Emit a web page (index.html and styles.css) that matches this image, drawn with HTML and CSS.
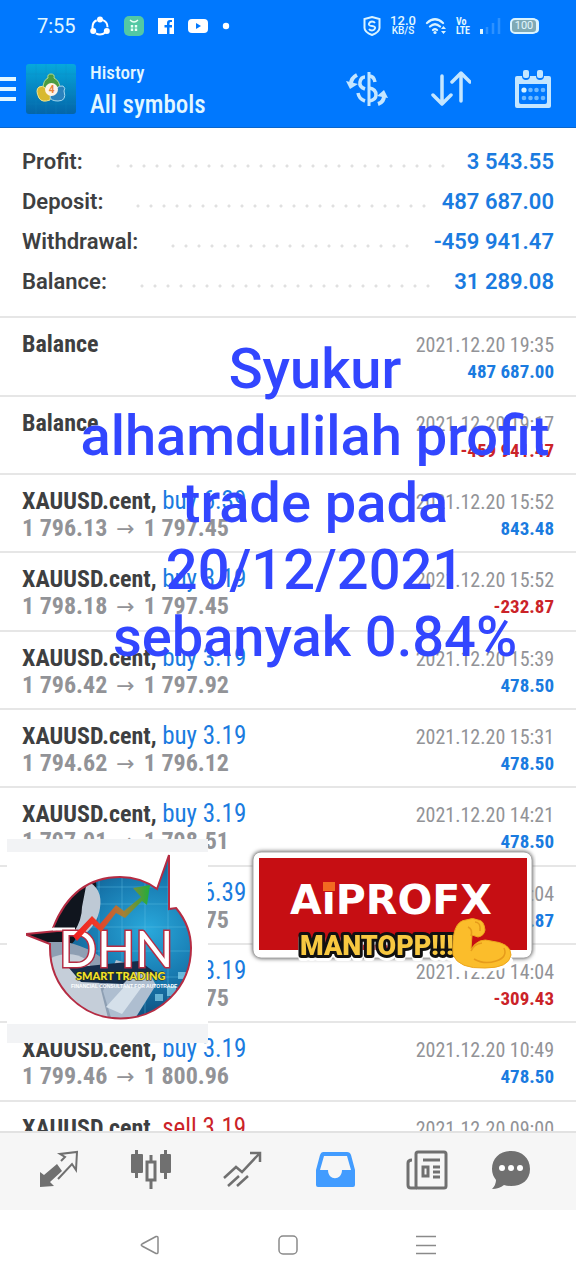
FILE: index.html
```html
<!DOCTYPE html>
<html lang="en">
<head>
    <meta charset="UTF-8">
    <meta name="viewport" content="width=device-width, initial-scale=1.0">
    <title>History</title>
    <link rel="stylesheet" href="styles.css">
</head>
<body>
    <header>
        <div class="status">
            <span class="time">7:55</span>
            <svg width="20" height="20" viewBox="0 0 20 20"><circle cx="10" cy="11" r="7.5" fill="none" stroke="#fff" stroke-width="2" stroke-dasharray="10 5.7" stroke-dashoffset="-6"/><circle cx="10" cy="3.5" r="3" fill="#fff"/><circle cx="3.2" cy="15" r="3" fill="#fff"/><circle cx="16.8" cy="15" r="3" fill="#fff"/></svg>
            <svg width="20" height="20" viewBox="0 0 20 20"><rect width="20" height="20" rx="5" fill="#53c8a4"/><path d="M6 4q4 4 8 0" fill="none" stroke="#e8fff5" stroke-width="1.3"/><path d="M8 9v6M12 9v6" stroke="#e8fff5" stroke-width="2.4" stroke-dasharray="2.4 1.2"/></svg>
            <svg width="16" height="16" viewBox="0 0 16 16"><path fill="#fff" d="M0 0h16v16h-4.500V9.500H14V7h-2.500V5.500c0-1 .5-1.500 1.500-1.500h1V2h-2c-2 0-3 1.200-3 3v2H6.500v2.500H9V16H0z"/></svg>
            <svg width="20" height="16" viewBox="0 0 20 16"><rect y="1" width="20" height="14" rx="4" fill="#fff"/><path d="M8 5l5 3-5 3z" fill="#0078fe"/></svg>
            <svg class="dot" width="8" height="8" viewBox="0 0 8 8"><circle cx="4" cy="4" r="3.200" fill="#fff"/></svg>
            <div class="system">
                <svg width="18" height="20" viewBox="0 0 18 20"><path d="M9 1l7.500 2v9q0 4-7.500 7Q1.500 16 1.500 12V3z" fill="none" stroke="#d9f3ff" stroke-width="2"/><path d="M12 7q-1-1.500-3-1.500T6 7.500 9 10t3 2.500-3 2-3-1.500" fill="none" stroke="#d9f3ff" stroke-width="1.800"/></svg>
                <span class="speed"><b>12.0</b><small>KB/S</small></span>
                <svg class="wifi" width="22" height="18" viewBox="0 0 22 18"><g fill="none" stroke="#d9f3ff" stroke-width="2.200" stroke-linecap="round"><path d="M2 6q8-7.500 16 0M5 9.500q5-4.500 10 0M8 13q2-1.800 4 0"/></g><circle cx="10" cy="15.500" r="1.600" fill="#d9f3ff"/><path d="M16 12l2.500-3 2.500 3zM16 14l2.500 3 2.500-3z" fill="#d9f3ff"/></svg>
                <span class="lte">Vo<br>LTE</span>
                <svg class="signal" width="22" height="18" viewBox="0 0 22 18"><path d="M2.500 12v5" stroke="#e2f7ff" stroke-width="3"/><path d="M8 10v7M14 6v11M20 1v16" stroke="#2c91ff" stroke-width="2.500"/></svg>
                <span class="battery">100</span>
            </div>
        </div>
        <div class="toolbar">
            <button class="menu" aria-label="Menu"><i></i><i></i><i></i></button>
            <svg class="logo" width="50" height="50" viewBox="0 0 50 50">
                <defs>
                    <linearGradient id="sea" x2="0" y2="1"><stop offset="0" stop-color="#06a8dc"/><stop offset="1" stop-color="#0465a8"/></linearGradient>
                </defs>
                <rect width="50" height="50" rx="3" fill="url(#sea)"/>
                <path d="M10 0v50M20 0v50M30 0v50M40 0v50M0 10h50M0 20h50M0 30h50M0 40h50" stroke="#0e8dc4" stroke-opacity=".5" stroke-width=".5"/>
                <path d="M17 25q0-9 5-11-1-4 3-4t3 4q6 3 6 11z" fill="#4b9b42" stroke="#b6dc8c"/>
                <path d="M13 23q4-2 6 1l6 4-1 8q-8 3-11-2-4-8 0-11z" fill="#d8b92f" stroke="#f3e68d"/>
                <path d="M37 22q3 2 1 5 3 10-6 10-7 0-8-4l5-8q5-4 8-3z" fill="#2b82bd" stroke="#a4d8ef"/>
                <circle cx="25.500" cy="25.500" r="6.500" fill="#fff3e6"/>
                <text x="25.500" y="29" class="four">4</text>
            </svg>
            <h1><small>History</small>All symbols</h1>
            <div class="actions">
                <button aria-label="Symbol"><svg width="42" height="36" viewBox="0 0 42 36" fill="none" stroke="#c4e6ff" stroke-width="3"><path d="M23 1v34"/><path d="M29 11q-1-6-6-6M23 17q7 1 7 7 0 5-7 6M19 18q-6-2-5-7 1-5 5-5M12 22q1 6 7 8" stroke-width="3.500"/><path d="M11 4q-6 3-6 9" stroke-width="4"/><path d="M0 10l4 8 8-5z" fill="#c4e6ff" stroke="none"/><path d="M32 33q6-2 6-8" stroke-width="4"/><path d="M31 25l7-6 4 8z" fill="#c4e6ff" stroke="none"/></svg></button>
                <button aria-label="Sort"><svg width="40" height="36" viewBox="0 0 40 36" fill="none" stroke="#c4e6ff" stroke-width="3.500" stroke-linecap="round" stroke-linejoin="round"><path d="M11 5v27M2 24l9 9 9-9M30 30V3M21 11l9-9 9 9"/></svg></button>
                <button aria-label="Period"><svg width="38" height="40" viewBox="0 0 38 40"><path fill-rule="evenodd" fill="#c4e6ff" d="M3 7h5q0 4 4 4t4-4h6q0 4 4 4t4-4h5q2 0 2 2v28q0 2-2 2H3q-2 0-2-2V9q0-2 2-2zm2 8v18q0 2 2 2h24q2 0 2-2V15z"/><rect x="9" y="1" width="6" height="8" rx="2" fill="#c4e6ff"/><rect x="23" y="1" width="6" height="8" rx="2" fill="#c4e6ff"/><g fill="#6db8ff"><circle cx="10" cy="21" r="2.600" fill="#d9f3ff"/><circle cx="16.500" cy="21" r="2.300"/><circle cx="22.500" cy="21" r="2.300"/><circle cx="29" cy="21" r="2.300"/><circle cx="10" cy="29" r="2.300"/><circle cx="16.500" cy="29" r="2.300"/><circle cx="22.500" cy="29" r="2.300"/><circle cx="29" cy="29" r="2.300"/></g></svg></button>
            </div>
        </div>
    </header>

    <dl class="summary">
        <div><dt>Profit:</dt><dd>3 543.55</dd></div>
        <div><dt>Deposit:</dt><dd>487 687.00</dd></div>
        <div><dt>Withdrawal:</dt><dd>-459 941.47</dd></div>
        <div><dt>Balance:</dt><dd>31 289.08</dd></div>
    </dl>

    <main>
        <ul class="history">
            <li><b>Balance</b><time>2021.12.20 19:35</time><span></span><strong>487 687.00</strong></li>
            <li><b>Balance</b><time>2021.12.20 19:17</time><span></span><strong class="loss">-459 941.47</strong></li>
            <li><b>XAUUSD.cent, <em>buy 6.39</em></b><time>2021.12.20 15:52</time><span>1 796.13<i>→</i>1 797.45</span><strong>843.48</strong></li>
            <li><b>XAUUSD.cent, <em>buy 3.19</em></b><time>2021.12.20 15:52</time><span>1 798.18<i>→</i>1 797.45</span><strong class="loss">-232.87</strong></li>
            <li><b>XAUUSD.cent, <em>buy 3.19</em></b><time>2021.12.20 15:39</time><span>1 796.42<i>→</i>1 797.92</span><strong>478.50</strong></li>
            <li><b>XAUUSD.cent, <em>buy 3.19</em></b><time>2021.12.20 15:31</time><span>1 794.62<i>→</i>1 796.12</span><strong>478.50</strong></li>
            <li><b>XAUUSD.cent, <em>buy 3.19</em></b><time>2021.12.20 14:21</time><span>1 797.01<i>→</i>1 798.51</span><strong>478.50</strong></li>
            <li><b>XAUUSD.cent, <em>buy 6.39</em></b><time>2021.12.20 14:04</time><span>1 796.42<i>→</i>1 796.75</span><strong>210.87</strong></li>
            <li><b>XAUUSD.cent, <em>buy 3.19</em></b><time>2021.12.20 14:04</time><span>1 797.72<i>→</i>1 796.75</span><strong class="loss">-309.43</strong></li>
            <li><b>XAUUSD.cent, <em>buy 3.19</em></b><time>2021.12.20 10:49</time><span>1 799.46<i>→</i>1 800.96</span><strong>478.50</strong></li>
            <li><b>XAUUSD.cent, <em class="loss">sell 3.19</em></b><time>2021.12.20 09:00</time><span></span><strong></strong></li>
        </ul>

        <p class="caption">Syukur<br>alhamdulilah profit<br>trade pada<br>20/12/2021<br>sebanyak 0.84%</p>

        <div class="dhn">
            <svg width="201" height="172" viewBox="0 0 201 172">
                <defs>
                    <radialGradient id="screen" cx=".7" cy=".45" r=".6"><stop offset="0" stop-color="#29a9dc"/><stop offset=".5" stop-color="#1778ae"/><stop offset="1" stop-color="#0d3f6b"/></radialGradient>
                    <linearGradient id="trend"><stop offset="0" stop-color="#f02020"/><stop offset=".3" stop-color="#ee3a28"/><stop offset=".65" stop-color="#a87f35"/><stop offset="1" stop-color="#1fae3c"/></linearGradient>
                    <clipPath id="badge"><path d="M46 76q20-51 67-51 21 0 37 12l12-34v54l7-1q15 18 15 40a70 70 0 0 1-141 0v-4L20 83v-1l30-3z"/></clipPath>
                </defs>
                <g clip-path="url(#badge)">
                    <rect width="201" height="172" fill="url(#screen)"/>
                    <path d="M92 0v172M115 0v172M138 0v172M161 0v172M80 35h121M80 52h121M80 75h121M80 99h121M80 125h121" stroke="#65c3e6" stroke-opacity=".4"/>
                    <path d="M20 20h64q9 10 3 26l-10 20q-4 18-14 28l-10 20H20z" fill="#10151e"/>
                    <path d="M80 29q16 7 13 27-3 18-18 28l-8-4q8-12 8-25z" fill="#bec9d5"/>
                    <path d="M40 90h20q30 8 39 21l10 10 22 50H60L40 120z" fill="#8e9fb3"/>
                    <path d="M44 106q20-9 36 2l12 22 11 44H70L52 142z" fill="#c5ced9"/>
                    <path d="M109 108l31 9 9 16-20 32-24 4-9-30z" fill="#aebed0"/>
                    <path d="M62 116l48-5 22-2 20 14-24-3-12 12-42-2z" fill="#152d4b"/>
                    <path d="M118 134l16 2-19 26-16-7z" fill="#d5e0ea"/>
                    <path d="M148 142h8v7h-8zM160 134h9v10h-9zM171 120h12v7h-12z" fill="#9de6fb" opacity=".6"/>
                </g>
                <path d="M46 76q20-51 67-51 21 0 37 12l12-34v54l7-1q15 18 15 40a70 70 0 0 1-141 0v-4L20 83v-1l30-3h28" fill="none" stroke="#b52c43" stroke-width="2"/>
                <path d="M46 77h22" stroke="#fff" stroke-width="3"/>
                <text x="52" y="115" class="dhn-name">DHN</text>
                <path d="M66 84l19-20 8 8 16-19 8 6 17-14-8-9 17-3-3 20-5-4-17 17-9-5-15 19-9-8-15 17z" fill="url(#trend)"/>
                <text x="69" y="128" class="dhn-tag">SMART TRADING</text>
                <text x="64" y="136" class="dhn-sub">FINANCIAL CONSULTANT FOR AUTOTRADE</text>
            </svg>
        </div>

        <svg class="sticker" width="290" height="130" viewBox="0 0 290 130">
            <rect x="7" y="6" width="279" height="106" rx="8" class="card"/>
            <rect x="13" y="12" width="268" height="92" fill="#c60e13"/>
            <text x="44" y="68" class="brand">AiPROFX</text>
            <path d="M77 36h12v9H77z" fill="#f26a21"/>
            <path d="M205 117q-2-4 7-12l46 3q12 4 8 9-10 10-36 9-20-1-25-9z" fill="#fff"/>
            <text x="54" y="109" class="cheer">MANTOPP!!!</text>
            <path d="M207 109q-2-34 13-35 7-3 12 0 6 0 7 10-1 6-7 7l-6-2-1 14q8-12 20-8 20 2 20 14-2 13-26 13-26 1-32-13z" fill="#fbbd2b" stroke="#eda71e"/>
            <path d="M222 81q5 2 3 9M229 76q6 0 5 9M236 97q-8 1-11 8M258 102q4 9-8 13t-22-2" fill="none" stroke="#e69b1b" stroke-width="1.500"/>
        </svg>
    </main>

    <nav class="tabs">
        <button aria-label="Quotes"><svg width="40" height="40" viewBox="0 0 40 40"><path d="M1 37V22l4 3 13-11 5 7-12 11 4 4z"/><path d="M22 11l4-4-5-3 17-2-1 18-4-6-14 15" fill="none" stroke="#707070" stroke-width="2"/></svg></button>
        <button aria-label="Charts"><svg width="42" height="40" viewBox="0 0 42 40"><path d="M5 0h3v4h4q1 0 1 1v17q0 1-1 1H8v5H5v-5H2q-1 0-1-1V5q0-1 1-1h3zM34 0h3v4h3q1 0 1 1v17q0 1-1 1h-3v6h-3v-6h-3q-1 0-1-1V5q0-1 1-1h3z"/><path d="M21 5v6M21 31v8" stroke="#707070" stroke-width="3"/><rect x="17" y="12" width="8" height="18" fill="none" stroke="#707070" stroke-width="3"/></svg></button>
        <button aria-label="Trade"><svg width="40" height="40" viewBox="0 0 40 40"><path d="M1 28l12-11 6 5L36 4M27 3h10v9M5 36l11-10M14 36l11-10" fill="none" stroke="#707070" stroke-width="2.500"/></svg></button>
        <button aria-label="History"><svg width="40" height="40" viewBox="0 0 40 40"><path fill="#429cff" fill-rule="evenodd" d="M8 2h24q3 0 4 3l4 15v15q0 2-2 2H3q-2 0-2-2V20L5 5q1-3 3-3zm1 4L5 20h8c0 11 14 11 14 0h9L32 6z"/></svg></button>
        <button aria-label="News"><svg width="42" height="40" viewBox="0 0 42 40"><g fill="none" stroke="#707070" stroke-width="3"><rect x="10" y="2" width="30" height="36" rx="2"/><path d="M11 38H5q-3 0-3-3V13q0-3 4-3"/><path d="M17 10h17M27 17h7M27 22h7M27 27h7"/><rect x="17" y="17" width="5" height="9"/></g></svg></button>
        <button aria-label="Messages"><svg width="40" height="40" viewBox="0 0 40 40"><path d="M20 1c11 0 19 7 19 18S31 36 20 36q-4 0-7-1-5 4-12 4 4-4 4-9-4-5-4-11C1 8 9 1 20 1z"/><g fill="#fff"><circle cx="11" cy="18" r="3"/><circle cx="20" cy="18" r="3"/><circle cx="29" cy="18" r="3"/></g></svg></button>
    </nav>
    <footer>
        <svg width="20" height="20" viewBox="0 0 20 20"><path d="M16 1.500L2 9q-1.500 1 0 2l14 7.500q2 .5 2-1.500V3q0-2-2-1.500z"/></svg>
        <svg width="20" height="20" viewBox="0 0 20 20"><rect x="1" y="1" width="18" height="18" rx="4"/></svg>
        <svg width="20" height="20" viewBox="0 0 20 20"><path d="M0 1.500h20M0 10.500h20M0 18.500h20"/></svg>
    </footer>
</body>
</html>
```
FILE: styles.css
```css
*{
    margin: 0;
    padding: 0;
    box-sizing: border-box;
}
body{
    height: 100vh;
    display: flex;
    flex-direction: column;
    background: #fff;
    color: #3e3f41;
    font-family: "Roboto Condensed", "Liberation Sans Narrow", Roboto, sans-serif;
}
ul{
    list-style: none;
}
button{
    border: 0;
    background: none;
    font: inherit;
}
svg{
    display: block;
}
em, i{
    font-style: normal;
}
header{
    background: #0078fe;
    color: #e2f7ff;
    border-bottom: 1px solid #0a66cc;
}
.status{
    height: 52px;
    padding: 0 38px 0 37px;
    display: flex;
    align-items: center;
    gap: 14px;
    font-family: Roboto, sans-serif;
}
.time{
    font-size: 20px;
}
.status .dot{
    margin-left: 0;
}
.system{
    flex: 1;
    display: flex;
    align-items: center;
    justify-content: flex-end;
    gap: 9px;
}
.speed{
    text-align: center;
    font-size: 13px;
    line-height: 10px;
}
.speed b, .speed small{
    display: block;
    font-weight: 500;
}
.speed small{
    font-size: 10px;
}
.lte{
    font: 700 10px/9px "Roboto Condensed", sans-serif;
}
.battery{
    width: 28px;
    height: 16px;
    border: 2px solid #d9f3ff;
    border-radius: 5px;
    background: #7fa9b5;
    font-size: 11px;
    line-height: 12px;
    text-align: center;
    box-shadow: 2px 0 0 -1px #d9f3ff;
}
.toolbar{
    height: 75px;
    padding: 0 24px 2px 0;
    display: flex;
    align-items: center;
}
.menu{
    width: 16px;
    display: flex;
    flex-direction: column;
    gap: 6px;
}
.menu i{
    height: 4px;
    background: #e2f7ff;
}
.logo{
    margin: 0 14px 0 10px;
}
.four{
    font: 700 10px Roboto, sans-serif;
    fill: #e8803a;
    text-anchor: middle;
}
h1{
    font-size: 25px;
    font-weight: 500;
    line-height: 32px;
}
h1 small{
    display: block;
    font-size: 19px;
}
.actions{
    flex: 1;
    display: flex;
    justify-content: flex-end;
    align-items: center;
    gap: 43px;
}
.summary{
    padding: 14px 22px;
    border-bottom: 2px solid #e6e6e6;
    font-family: Roboto, sans-serif;
    font-size: 22px;
    font-weight: 600;
    line-height: 40px;
}
.summary div{
    display: flex;
}
.summary dt{
    flex: 1;
    display: flex;
}
.summary dt::after{
    content: "";
    flex: 1;
    margin: 0 16px 0 31px;
    background: radial-gradient(circle at 4px 24px, #e0e0e0 1px, transparent 2px) repeat-x;
    background-size: 13px 40px;
}
.summary dd{
    color: #1a7be0;
}
main{
    flex: 1;
    min-height: 0;
    position: relative;
    overflow: hidden;
}
.history li{
    height: 78px;
    padding: 12px 22px;
    display: grid;
    grid-template-columns: 1fr auto;
    grid-auto-rows: 27px;
    line-height: 28px;
    border-bottom: 2px solid #e6e6e6;
}
.history li:nth-child(3n+1){
    height: 79px;
}
.history b{
    font-size: 24px;
}
.history em{
    font-size: 25px;
    font-weight: 400;
    color: #1a7be0;
}
.history time{
    font-size: 20px;
    line-height: 31px;
    text-align: right;
    color: #929397;
}
.history span{
    font-size: 24px;
    font-weight: 700;
    color: #929397;
}
.history span i{
    padding: 0 9px;
    font-family: "DejaVu Sans", sans-serif;
    font-size: 22px;
    font-weight: 400;
}
.history strong{
    font-size: 19px;
    line-height: 30px;
    text-align: right;
    color: #1a7be0;
}
.history .loss{
    color: #cb2328;
}
.caption{
    position: absolute;
    top: 18px;
    left: 54px;
    right: 0;
    text-align: center;
    font-family: Roboto, sans-serif;
    font-size: 56px;
    font-weight: 500;
    line-height: 67px;
    color: #3246ff;
}
.dhn{
    position: absolute;
    top: 521px;
    left: 7px;
    background: #fff;
    border-top: 13px solid #f2f3f5;
    border-bottom: 19px solid #f2f3f5;
}
.dhn-name{
    font: 50px Lato, sans-serif;
    fill: #fff;
    stroke: #b52c43;
    stroke-width: 3px;
    paint-order: stroke;
}
.dhn-tag{
    font: 900 11px Lato, sans-serif;
    fill: #f3e22c;
    stroke: #2a2a12;
    stroke-width: 1px;
    paint-order: stroke;
}
.dhn-sub{
    font: 700 5px "Liberation Sans", sans-serif;
    fill: #fff;
}
.sticker{
    position: absolute;
    top: 528px;
    left: 246px;
}
.card{
    fill: #fff;
    stroke: #aaa;
    filter: drop-shadow(0 0 2px #555);
}
.brand{
    font: 700 41px "DejaVu Sans", sans-serif;
    fill: #fff;
}
.cheer{
    font: 900 27px Roboto, sans-serif;
    fill: #f8c840;
    stroke: #111;
    stroke-width: 6px;
    stroke-linejoin: round;
    paint-order: stroke;
    filter: drop-shadow(0 3px 0 #fff);
}
.tabs{
    height: 79px;
    padding: 0 27px 3px 13px;
    display: grid;
    grid-template-columns: repeat(5, 23fr) 19fr;
    align-items: center;
    background: #f6f6f6;
    border-top: 2px solid #e2e2e2;
}
.tabs svg{
    margin: 0 auto;
    fill: #707070;
}
footer{
    height: 70px;
    display: flex;
    justify-content: center;
    align-items: center;
    gap: 118px;
}
footer svg{
    fill: none;
    stroke: #8a8a8a;
    stroke-width: 1.5px;
}
```
